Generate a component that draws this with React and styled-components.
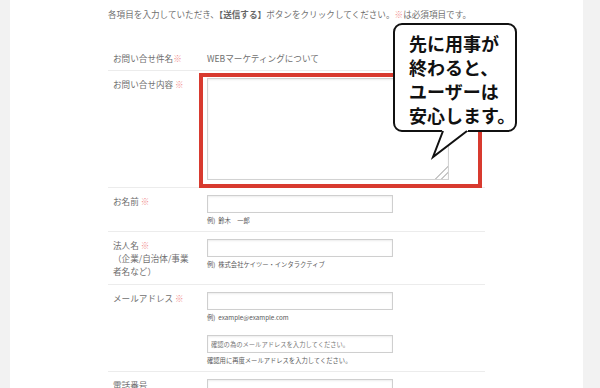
import React from "react";
import styled, { createGlobalStyle } from "styled-components";

const GlobalStyle = createGlobalStyle`
  html, body {
    margin: 0;
    padding: 0;
    background: #f2f2f2;
  }
  body {
    font-family: "Noto Sans CJK JP", "Noto Sans", sans-serif;
  }
`;

const Req = () => <StyledReq>※</StyledReq>;

const Field = ({ placeholder, hint }) => (
  <FieldBox>
    <StyledInput placeholder={placeholder} />
    {hint && <Hint>{hint}</Hint>}
  </FieldBox>
);

const App = () => {
  return (
    <Page>
      <GlobalStyle />
      <Panel>
        <Intro>
          各項目を入力していただき、<strong>【送信する】</strong>
          ボタンをクリックしてください。
          <StyledReq>※</StyledReq>は必須項目です。
        </Intro>
        <Form>
          <Row $plain>
            <Label>
              お問い合せ件名
              <Req />
            </Label>
            <Value>WEBマーケティングについて</Value>
          </Row>
          <Row>
            <Label>
              お問い合せ内容 <Req />
            </Label>
            <Cell>
              <Highlight>
                <StyledTextarea />
              </Highlight>
            </Cell>
          </Row>
          <Row>
            <Label>
              お名前 <Req />
            </Label>
            <Cell>
              <Field hint="例)  鈴木　一郎" />
            </Cell>
          </Row>
          <Row>
            <Label>
              法人名 <Req />
              <br />
              （企業/自治体/事業
              <br />
              者名など）
            </Label>
            <Cell>
              <Field hint="例)  株式会社ケイツー・インタラクティブ" />
            </Cell>
          </Row>
          <Row>
            <Label>
              メールアドレス <Req />
            </Label>
            <Cell>
              <Field hint="例)  example@example.com" />
              <Field
                placeholder="確認の為のメールアドレスを入力してください。"
                hint="確認用に再度メールアドレスを入力してください。"
              />
            </Cell>
          </Row>
          <Row>
            <Label>電話番号</Label>
            <Cell>
              <Field />
            </Cell>
          </Row>
        </Form>

        <Bubble>
          先に用事が
          <br />
          終わると、
          <br />
          ユーザーは
          <br />
          安心します。
        </Bubble>
        <Tail width="50" height="34" viewBox="0 0 50 34">
          <polygon points="12,0 38,0 38,3 3,29 12,3" fill="#fff" />
          <polyline
            points="13,3 3,29 37,3"
            fill="none"
            stroke="#111"
            strokeWidth="2"
            strokeLinejoin="miter"
          />
        </Tail>
      </Panel>
    </Page>
  );
};
export default App;

const Page = styled.div`
  width: 600px;
  height: 388px;
  overflow: hidden;
  display: flex;
  padding: 0 17px 0 10px;
  box-sizing: border-box;
  background: #f2f2f2;
`;
const Panel = styled.div`
  position: relative;
  flex: 1;
  background: #fff;
  padding: 8px 0 0 98px;
  color: #6b6b6b;
`;
const Intro = styled.p`
  margin: 0 0 27px;
  font-size: 8.6px;
  line-height: 12px;
  white-space: nowrap;
  color: #707070;
  strong {
    font-weight: 700;
    color: #666;
  }
`;
const StyledReq = styled.span`
  color: #f19090;
`;
const Form = styled.div`
  width: 377px;
`;
const Row = styled.div`
  display: grid;
  grid-template-columns: 99px 1fr;
  align-items: ${(p) => (p.$plain ? "center" : "start")};
  height: ${(p) => (p.$plain ? "23px" : "auto")};
  padding: ${(p) => (p.$plain ? "0" : "7px 0 6px")};
  border-bottom: 1px solid #ececec;
`;
const Label = styled.div`
  padding-left: 5px;
  font-size: 8.6px;
  line-height: 13px;
  color: #6f6f6f;
  white-space: nowrap;
`;
const Value = styled.div`
  font-size: 8.6px;
  line-height: 13px;
  color: #6f6f6f;
`;
const Cell = styled.div`
  display: flex;
  flex-direction: column;
  align-items: flex-start;
  gap: 13px;
`;
const Highlight = styled.div`
  position: relative;
  margin-bottom: 1px;
  &::before {
    content: "";
    position: absolute;
    left: -8px;
    top: -5px;
    right: -33px;
    bottom: -8px;
    border: 4px solid #d83a2f;
    pointer-events: none;
  }
`;
const StyledTextarea = styled.textarea`
  display: block;
  width: 242px;
  height: 102px;
  box-sizing: border-box;
  border: 1px solid #d2d2d2;
  box-shadow: inset 0 1px 2px rgba(0, 0, 0, 0.08);
  margin: 0;
  padding: 2px;
  &::-webkit-resizer {
    background: linear-gradient(
      135deg,
      transparent 55%,
      #c8c8c8 55%,
      #c8c8c8 62%,
      transparent 62%,
      transparent 75%,
      #c8c8c8 75%,
      #c8c8c8 82%,
      transparent 82%
    );
  }
`;
const FieldBox = styled.div`
  display: flex;
  flex-direction: column;
`;
const StyledInput = styled.input`
  width: 186px;
  height: 18px;
  box-sizing: border-box;
  margin: 0;
  padding: 0 3px;
  border: 1px solid #cfcfcf;
  box-shadow: inset 0 1px 2px rgba(0, 0, 0, 0.08);
  font-family: inherit;
  font-size: 6.3px;
  &::placeholder {
    color: #777;
  }
`;
const Hint = styled.div`
  margin-top: 3px;
  font-size: 6.3px;
  line-height: 9px;
  color: #5a5a5a;
  white-space: pre;
`;
const Bubble = styled.div`
  position: absolute;
  left: 383px;
  top: 23px;
  width: 124px;
  height: 109px;
  box-sizing: border-box;
  padding: 6px 0 0 14px;
  border: 2px solid #111;
  border-radius: 9px;
  background: #fff;
  font-size: 18px;
  line-height: 24px;
  font-weight: 700;
  color: #111;
  white-space: nowrap;
  z-index: 2;
`;
const Tail = styled.svg`
  position: absolute;
  left: 420px;
  top: 128px;
  z-index: 3;
`;
